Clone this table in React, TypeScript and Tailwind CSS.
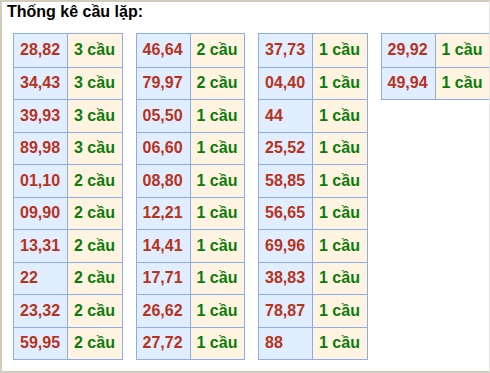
import React from "react";

const tables: [string, string][][] = [
  [
    ["28,82", "3 cầu"],
    ["34,43", "3 cầu"],
    ["39,93", "3 cầu"],
    ["89,98", "3 cầu"],
    ["01,10", "2 cầu"],
    ["09,90", "2 cầu"],
    ["13,31", "2 cầu"],
    ["22", "2 cầu"],
    ["23,32", "2 cầu"],
    ["59,95", "2 cầu"],
  ],
  [
    ["46,64", "2 cầu"],
    ["79,97", "2 cầu"],
    ["05,50", "1 cầu"],
    ["06,60", "1 cầu"],
    ["08,80", "1 cầu"],
    ["12,21", "1 cầu"],
    ["14,41", "1 cầu"],
    ["17,71", "1 cầu"],
    ["26,62", "1 cầu"],
    ["27,72", "1 cầu"],
  ],
  [
    ["37,73", "1 cầu"],
    ["04,40", "1 cầu"],
    ["44", "1 cầu"],
    ["25,52", "1 cầu"],
    ["58,85", "1 cầu"],
    ["56,65", "1 cầu"],
    ["69,96", "1 cầu"],
    ["38,83", "1 cầu"],
    ["78,87", "1 cầu"],
    ["88", "1 cầu"],
  ],
  [
    ["29,92", "1 cầu"],
    ["49,94", "1 cầu"],
  ],
];

export default function App() {
  return (
    <div
      className="w-[490px] h-[373px] bg-white border-t-2 border-l-2 border-b-2 border-r border-t-[#d3cbbd] border-l-[#d3cbbd] border-b-[#d3cbbd] border-r-[#e4e4e4] overflow-hidden"
      style={{ fontFamily: '"Liberation Sans", Arial, sans-serif' }}
    >
      <div className="pl-[5px] pt-[0px] text-[16px] font-bold leading-[19px] text-black">
        Thống kê cầu lặp:
      </div>
      <div className="flex items-start gap-[13px] pl-[11px] pt-[12px]">
        {tables.map((t, ti) => (
          <div
            key={ti}
            className="w-[109.5px] shrink-0 border border-[#8cacee] flex flex-col"
          >
            {t.map(([n, c], ri) => (
              <div
                key={ri}
                className={`flex h-[32.5px] ${ri > 0 ? "border-t border-[#8cacee]" : ""}`}
              >
                <div className="w-[54px] shrink-0 bg-[#e1eeff] border-r border-[#8cacee] flex items-center pl-[6px] text-[16px] font-bold text-[#b8321c]">
                  {n}
                </div>
                <div className="flex-1 bg-[#fff4e2] flex items-center pl-[6px] text-[16px] font-bold text-[#0b7c0b]">
                  {c}
                </div>
              </div>
            ))}
          </div>
        ))}
      </div>
    </div>
  );
}
